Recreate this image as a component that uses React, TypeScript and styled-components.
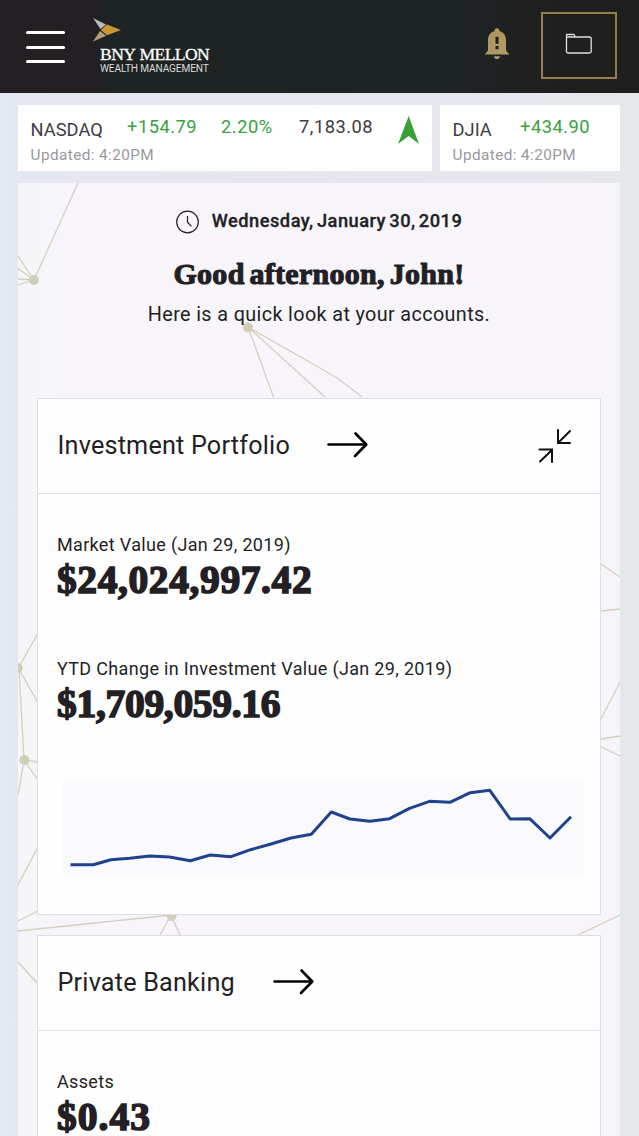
import React from "react";
import styled, { createGlobalStyle } from "styled-components";

const Global = createGlobalStyle`
  * { box-sizing: border-box; }
  body { margin: 0; background: #e5e7ee; font-family: Roboto, "Liberation Sans", sans-serif; color: #231f24; }
`;

const Page = styled.div`
  height: 1136px;
  overflow: hidden;
  background: linear-gradient(90deg, #e4e8f2 0, #e6e7ed 50%, #e4e8eb 100%);
`;

const Header = styled.header`
  height: 93px;
  display: flex;
  align-items: flex-start;
  background: linear-gradient(90deg, #231f22 0, #231f22 90px, #1e2323 110px, #1e2323 470px, #201f20 550px);
`;

const MenuButton = styled.button`
  margin: 31px 0 0 26px;
  width: 39px;
  height: 32px;
  padding: 0;
  border: 0;
  background: none;
  display: flex;
  flex-direction: column;
  justify-content: space-between;
`;

const MenuBar = styled.span`
  display: block;
  height: 3px;
  border-radius: 2px;
  background: #fff;
`;

const Brand = styled.div`
  margin: 18px 0 0 28px;
  width: 130px;
  display: flex;
  flex-direction: column;
  white-space: nowrap;
`;

const BrandMark = styled.svg`
  display: block;
  width: 30px;
  height: 24px;
`;

const BrandName = styled.span`
  margin: 2px 0 0 7px;
  font: 400 17.6px/20px "Liberation Serif", serif;
  letter-spacing: -0.6px;
  color: #fff;
  word-spacing: 1px;
  -webkit-text-stroke: 0.3px #fff;
`;

const BrandUnit = styled.span`
  margin-left: 7px;
  font-size: 10.1px;
  line-height: 10px;
  letter-spacing: -0.12px;
  color: #dcdcdc;
`;

const Actions = styled.div`
  margin-left: auto;
  padding: 12px 22px 0 0;
  display: flex;
  align-items: flex-start;
`;

const BellIcon = styled.svg`
  width: 26px;
  height: 32px;
  margin: 16px 31px 0 0;
`;

const FolderButton = styled.button`
  width: 76px;
  height: 67px;
  padding: 0 0 3px;
  display: flex;
  align-items: center;
  justify-content: center;
  background: none;
  border: 2px solid #94804f;
`;

const Tickers = styled.section`
  display: flex;
  gap: 8px;
  padding: 12px 19px 0 18px;
`;

const Ticker = styled.article<{ $width: number }>`
  width: ${(p) => p.$width}px;
  height: 66px;
  padding: 10px 0 0 12.6px;
  background: #fff;
  white-space: nowrap;
`;

const TickerRow = styled.div`
  display: flex;
  height: 30px;
`;

const TickerName = styled.span<{ $width: number }>`
  width: ${(p) => p.$width}px;
  font-size: 18.3px;
  line-height: 30px;
  color: #3e3c40;
`;

const TickerValue = styled.span<{ $width: number; $up?: boolean }>`
  width: ${(p) => p.$width}px;
  font-size: 18.3px;
  line-height: 24px;
  letter-spacing: 0.48px;
  color: ${(p) => (p.$up ? "#3a9f42" : "#3e3c40")};
`;

const Updated = styled.div`
  font-size: 15.3px;
  line-height: 20px;
  letter-spacing: 0.42px;
  color: #99989b;
`;

const Panel = styled.main`
  position: relative;
  width: 602px;
  height: 953px;
  margin: 12px 0 0 18px;
  padding: 0 19px 0 19px;
  background: linear-gradient(90deg, #f5f6f7 0, #f7f5fa 40px);
`;

const Network = styled.svg`
  position: absolute;
  inset: 0;
  width: 602px;
  height: 953px;
`;

const Greeting = styled.div`
  position: relative;
  height: 215px;
  padding-top: 24px;
  display: flex;
  flex-direction: column;
  align-items: center;
  white-space: nowrap;
`;

const DateLine = styled.div`
  display: flex;
  align-items: flex-start;
  gap: 12px;
  height: 30px;
  font-size: 18.3px;
  font-weight: 500;
  line-height: 28px;
  letter-spacing: 0.48px;
  word-spacing: -1.8px;
  -webkit-text-stroke: 0.3px #231f24;
`;

const ClockIcon = styled.svg`
  width: 24px;
  height: 24px;
  margin-top: 3px;
`;

const Hello = styled.h1`
  margin: 19px 0 0;
  font: 700 30px/36px "Liberation Serif", serif;
  letter-spacing: 0.3px;
  word-spacing: -3px;
  -webkit-text-stroke: 1.1px #231f24;
`;

const Intro = styled.p`
  margin: 9px 0 0;
  font-size: 19.8px;
  line-height: 28px;
  letter-spacing: 0.37px;
`;

const Card = styled.section<{ $height: number }>`
  position: relative;
  width: 564px;
  height: ${(p) => p.$height}px;
  margin-bottom: 20px;
  background: #fefefe;
  border: 1.5px solid #dfdee3;
  white-space: nowrap;
`;

const CardHeader = styled.div`
  height: 95px;
  padding: 0 28px 0 19.5px;
  display: flex;
  align-items: center;
  border-bottom: 1.5px solid #dfdee3;
`;

const CardTitle = styled.h2<{ $width: number }>`
  margin: 0;
  width: ${(p) => p.$width}px;
  font-size: 25.2px;
  font-weight: 400;
  line-height: 36px;
  letter-spacing: 0.2px;
`;

const ArrowIcon = styled.svg`
  width: 42px;
  height: 28px;
  margin-top: -2px;
`;

const CollapseIcon = styled.svg`
  width: 34px;
  height: 36px;
  margin-left: auto;
`;

const CardBody = styled.div`
  padding: 38px 15px 0 19px;
`;

const Figure = styled.div`
  height: 124px;
`;

const FigureLabel = styled.div`
  font-size: 18px;
  line-height: 26px;
  letter-spacing: 0.33px;
`;

const FigureValue = styled.div<{ $spacing: number }>`
  padding-top: 3px;
  font: 700 39.5px/38px "Liberation Serif", serif;
  letter-spacing: ${(p) => p.$spacing}px;
  -webkit-text-stroke: 1.6px #231f24;
`;

const Chart = styled.svg`
  display: block;
  width: 528px;
  height: 96px;
`;

const TREND: [number, number][] = [
  [70.5, 864.7], [93.3, 864.7], [110.8, 859.7], [129.6, 858.3], [150, 856], [169.5, 857],
  [190.3, 860.7], [210.3, 855], [231, 856.7], [250.6, 849.7], [271, 844], [291, 838],
  [311.3, 834.3], [331.3, 812], [350, 819], [370, 821.3], [389.6, 818.7], [409.5, 808.3],
  [429.5, 801.3], [449.9, 802.3], [470.3, 792.7], [489.8, 790.3], [510.2, 819],
  [529.7, 818.7], [550, 838], [571, 816.7],
];

const Arrow = () => (
  <ArrowIcon viewBox="0 0 42 28" fill="none" stroke="#000" strokeWidth="2.6" strokeLinecap="round" strokeLinejoin="round">
    <path d="M1.5 13.5H39M28.5 2.5L39.3 13.5L28 25" />
  </ArrowIcon>
);

export default function App() {
  return (
    <Page>
      <Global />
      <Header>
        <MenuButton aria-label="Menu"><MenuBar /><MenuBar /><MenuBar /></MenuButton>
        <Brand>
          <BrandMark viewBox="0 0 30 24">
            <path d="M0 0L13 6.5L7.5 11Z" fill="#b9b9c1" />
            <path d="M14 6.5L28 12L14 17.2L7.8 12Z" fill="#c99534" />
            <path d="M7 13L13.3 17.8L0 23.5Z" fill="#ada07b" />
          </BrandMark>
          <BrandName>BNY MELLON</BrandName>
          <BrandUnit>WEALTH MANAGEMENT</BrandUnit>
        </Brand>
        <Actions>
          <BellIcon viewBox="0 0 26 32">
            <path d="M13 .3A2.6 2.6 0 0 1 15.6 3.3C20 4.5 22 8 22 12V22.5L25.4 26.4H.6L4 22.5V12C4 8 6 4.5 10.4 3.3A2.6 2.6 0 0 1 13 .3Z" fill="#ae9963" />
            <path d="M9.8 28.2H16.2C15.7 30.3 14.6 31 13 31S10.3 30.3 9.8 28.2Z" fill="#ae9963" />
            <path d="M11.5 8.8H14.5V15.8H11.5ZM11.5 18H14.5V21.2H11.5Z" fill="#1e2020" />
          </BellIcon>
          <FolderButton aria-label="Documents">
            <svg width="28" height="22" viewBox="0 0 28 22" fill="none" stroke="#dedede" strokeWidth="1.3" strokeLinejoin="round">
              <path d="M1.5 4V1.5H9L10.5 4M1.5 4H24.5Q26.2 4 26.2 5.5V18.5Q26.2 20 24.5 20H3Q1.5 20 1.5 18.5Z" />
            </svg>
          </FolderButton>
        </Actions>
      </Header>

      <Tickers>
        <Ticker $width={414}>
          <TickerRow>
            <TickerName $width={96.5}>NASDAQ</TickerName>
            <TickerValue $width={94} $up>+154.79</TickerValue>
            <TickerValue $width={78} $up>2.20%</TickerValue>
            <TickerValue $width={99}>7,183.08</TickerValue>
            <svg width="22" height="30" viewBox="0 0 22 30">
              <path d="M10.7 1L21 29L10.7 21L0 29Z" fill="#3b9f38" />
            </svg>
          </TickerRow>
          <Updated>Updated: 4:20PM</Updated>
        </Ticker>
        <Ticker $width={180}>
          <TickerRow>
            <TickerName $width={67.5}>DJIA</TickerName>
            <TickerValue $width={80} $up>+434.90</TickerValue>
          </TickerRow>
          <Updated>Updated: 4:20PM</Updated>
        </Ticker>
      </Tickers>

      <Panel>
        <Network viewBox="18 183 602 953" fill="none" stroke="#d3d0c2" strokeWidth="1.3">
          <path d="M78 183L34 280L18 256M34 280L18 268.5M34 280L18 279M34 280L18 285" />
          <path d="M273.5 397L248 327L325 397M248 327L320 368L340 380L362 397" />
          <path d="M38 633L18.5 668L38 703M19 668L24 760L38 762M38 780L24 760L18 795M38 847L18 885M38 911L18 921" />
          <path d="M18 931L171 915L160 935M171 915L180 935M18 962L38 984M620 915L578 935" />
          <path d="M601 564L620 577M601 611L620 609M601 719L620 682M601 739L620 736M601 747L620 756" />
          <g fill="#d2cfb7" stroke="none">
            <circle cx="34" cy="280" r="5" />
            <circle cx="248" cy="327.5" r="5" />
            <circle cx="18" cy="668" r="4.8" />
            <circle cx="24.3" cy="760" r="5" />
            <circle cx="171.5" cy="916" r="5" />
          </g>
        </Network>

        <Greeting>
          <DateLine>
            <ClockIcon viewBox="0 0 24 24" fill="none" stroke="#231f24" strokeWidth="1.2">
              <circle cx="11.5" cy="12" r="10.8" />
              <path d="M11.5 6V12.2L15.5 16.3" />
            </ClockIcon>
            Wednesday, January 30, 2019
          </DateLine>
          <Hello>Good afternoon, John!</Hello>
          <Intro>Here is a quick look at your accounts.</Intro>
        </Greeting>

        <Card $height={517}>
          <CardHeader>
            <CardTitle $width={269}>Investment Portfolio</CardTitle>
            <Arrow />
            <CollapseIcon viewBox="0 0 34 36" fill="none" stroke="#111" strokeWidth="2" strokeLinecap="round">
              <path d="M32 3L20.5 14.5M20 2V15H32M2 33.5L14 22M1.5 21.5H14V34" />
            </CollapseIcon>
          </CardHeader>
          <CardBody>
            <Figure>
              <FigureLabel>Market Value (Jan 29, 2019)</FigureLabel>
              <FigureValue $spacing={0.6}>$24,024,997.42</FigureValue>
            </Figure>
            <Figure>
              <FigureLabel>YTD Change in Investment Value (Jan 29, 2019)</FigureLabel>
              <FigureValue $spacing={-0.3}>$1,709,059.16</FigureValue>
            </Figure>
            <Chart viewBox="57 780 528 96">
              <rect x="63" y="780" width="521" height="95" fill="#fafafc" />
              <polyline points={TREND.map((p) => p.join(",")).join(" ")} fill="none" stroke="#1f428d" strokeWidth="3" strokeLinejoin="round" />
            </Chart>
          </CardBody>
        </Card>

        <Card $height={300}>
          <CardHeader>
            <CardTitle $width={215}>Private Banking</CardTitle>
            <Arrow />
          </CardHeader>
          <CardBody>
            <Figure>
              <FigureLabel>Assets</FigureLabel>
              <FigureValue $spacing={1}>$0.43</FigureValue>
            </Figure>
          </CardBody>
        </Card>
      </Panel>
    </Page>
  );
}
